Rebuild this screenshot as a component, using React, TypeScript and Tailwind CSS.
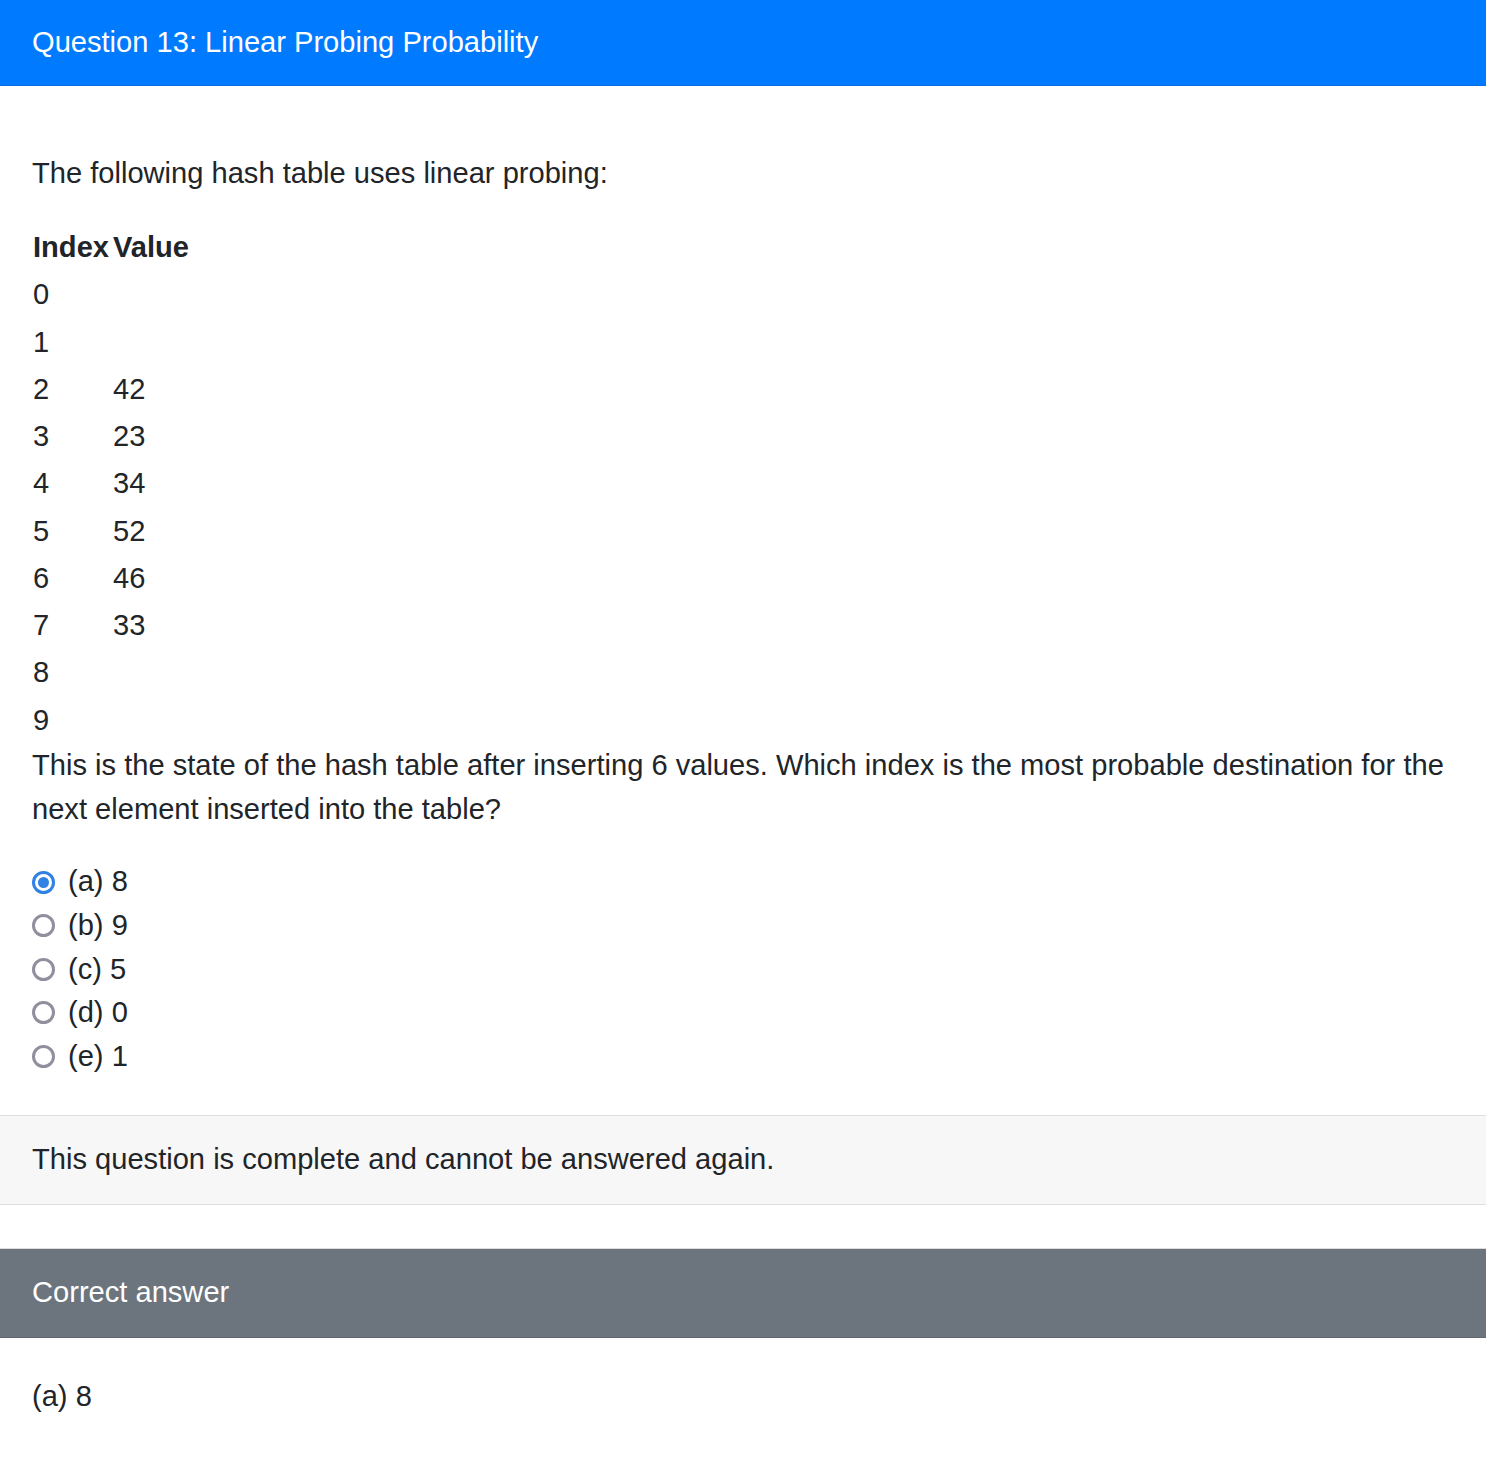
const rows: [string, string][] = [
  ["0", ""],
  ["1", ""],
  ["2", "42"],
  ["3", "23"],
  ["4", "34"],
  ["5", "52"],
  ["6", "46"],
  ["7", "33"],
  ["8", ""],
  ["9", ""],
];

const options = [
  { label: "(a) 8", checked: true },
  { label: "(b) 9", checked: false },
  { label: "(c) 5", checked: false },
  { label: "(d) 0", checked: false },
  { label: "(e) 1", checked: false },
];

const Radio = ({ checked }: { checked: boolean }) =>
  checked ? (
    <span className="flex h-[23px] w-[23px] items-center justify-center rounded-full border-[3px] border-[#2f81e4] bg-white">
      <span className="h-[11px] w-[11px] rounded-full bg-[#2f81e4]" />
    </span>
  ) : (
    <span className="h-[23px] w-[23px] rounded-full border-[3px] border-[#8f8f9d] bg-white" />
  );

export default function App() {
  return (
    <div className="min-h-[1466px] bg-white text-[29.1px] leading-[43.65px] text-[#212529] [font-family:'Liberation_Sans',Arial,sans-serif]">
      <div className="border-b border-[#0a6ee0] bg-[#007bff] px-[32px] py-[20.5px] text-white">
        Question 13: Linear Probing Probability
      </div>

      <div className="px-[32px] pt-[66px] pb-[37px]">
        <p className="mb-[29px]">The following hash table uses linear probing:</p>
        <div className="grid w-max grid-cols-[80px_auto] pl-[1px]">
          <div className="py-[1.8px] font-bold">Index</div>
          <div className="py-[1.8px] font-bold">Value</div>
          {rows.map(([i, v]) => (
            <div key={i} className="contents">
              <div className="py-[1.8px]">{i}</div>
              <div className="py-[1.8px]">{v}</div>
            </div>
          ))}
        </div>
        <p className="mb-[29px]">
          This is the state of the hash table after inserting 6 values. Which index is the most probable destination
          for the next element inserted into the table?
        </p>
        <div className="flex flex-col">
          {options.map((o) => (
            <label key={o.label} className="flex h-[43.6px] items-center gap-[13px]">
              <Radio checked={o.checked} />
              <span>{o.label}</span>
            </label>
          ))}
        </div>
      </div>

      <div className="border-y border-[#dfdfdf] bg-[#f7f7f7] px-[32px] py-[22px]">
        This question is complete and cannot be answered again.
      </div>

      <div className="mt-[43px] border-t border-[#dcdcdc] border-b border-b-[#5f666d] bg-[#6c757d] px-[32px] py-[22px] text-white">
        Correct answer
      </div>
      <div className="px-[32px] py-[37px]">(a) 8</div>
    </div>
  );
}
